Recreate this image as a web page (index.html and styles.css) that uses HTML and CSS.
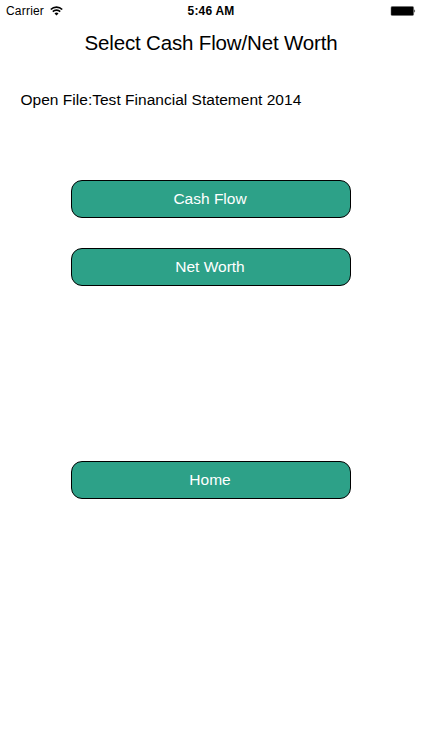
FILE: index.html
```html
<!DOCTYPE html>
<html lang="en">
<head>
<meta charset="utf-8">
<title>Select Cash Flow/Net Worth</title>
<link rel="stylesheet" href="styles.css">
</head>
<body>
<header class="status">
  <div class="carrier"><span>Carrier</span>
  <svg width="13" height="10" viewBox="0 0 13 10"><path d="M.8 3.5a8 8 0 0 1 11.4 0M2.8 5.7a5.2 5.2 0 0 1 7.4 0" fill="none" stroke="#000" stroke-width="1.7"/><path d="M4.5 7.4a2.8 2.8 0 0 1 4 0L6.5 9.5z"/></svg></div>
  <time>5:46 AM</time>
  <svg class="battery" width="26" height="10" viewBox="0 0 26 10"><rect x="1" y=".4" width="22.6" height="9.2" rx="1.3" stroke="#666" stroke-width=".5"/><path d="M24.4 3.3q1.6 1.7 0 3.4z"/></svg>
</header>
<h1>Select Cash Flow/Net Worth</h1>
<p class="file">Open File:Test Financial Statement 2014</p>
<main>
  <button class="cash">Cash Flow</button>
  <button class="worth">Net Worth</button>
  <button class="home">Home</button>
</main>
</body>
</html>
```
FILE: styles.css
```css
* { box-sizing: border-box; }
body { margin: 0; width: 422px; height: 750px; overflow: hidden; background: #fff; color: #000; font-family: "Liberation Sans", Arial, sans-serif; }
.status { display: grid; grid-template-columns: 1fr auto 1fr; align-items: center; height: 22px; padding: 0 6px 0 6px; font-size: 11.5px; }
.carrier { display: flex; align-items: center; gap: 6px; }
.carrier span { width: 38px; font-size: 12px; letter-spacing: 0.2px; white-space: nowrap; }
.status time { font-size: 12px; font-weight: 700; letter-spacing: 0.2px; }
.battery { justify-self: end; }
h1 { margin: 8px 0 0; font-size: 20.5px; line-height: 26px; font-weight: 400; letter-spacing: -0.16px; text-align: center; white-space: nowrap; }
.file { margin: 34px 0 0 20.5px; font-size: 15.5px; line-height: 20px; letter-spacing: 0.02px; white-space: nowrap; }
main { display: flex; flex-direction: column; align-items: center; padding-top: 70px; }
button { width: 280px; height: 38px; padding: 0 2px 0 0; border: 1.4px solid #000; border-radius: 11px; background: #2da188; color: #fff; font: 15.5px "Liberation Sans", Arial, sans-serif; }
.worth { margin-top: 30px; }
.home { margin-top: 175px; }
```
